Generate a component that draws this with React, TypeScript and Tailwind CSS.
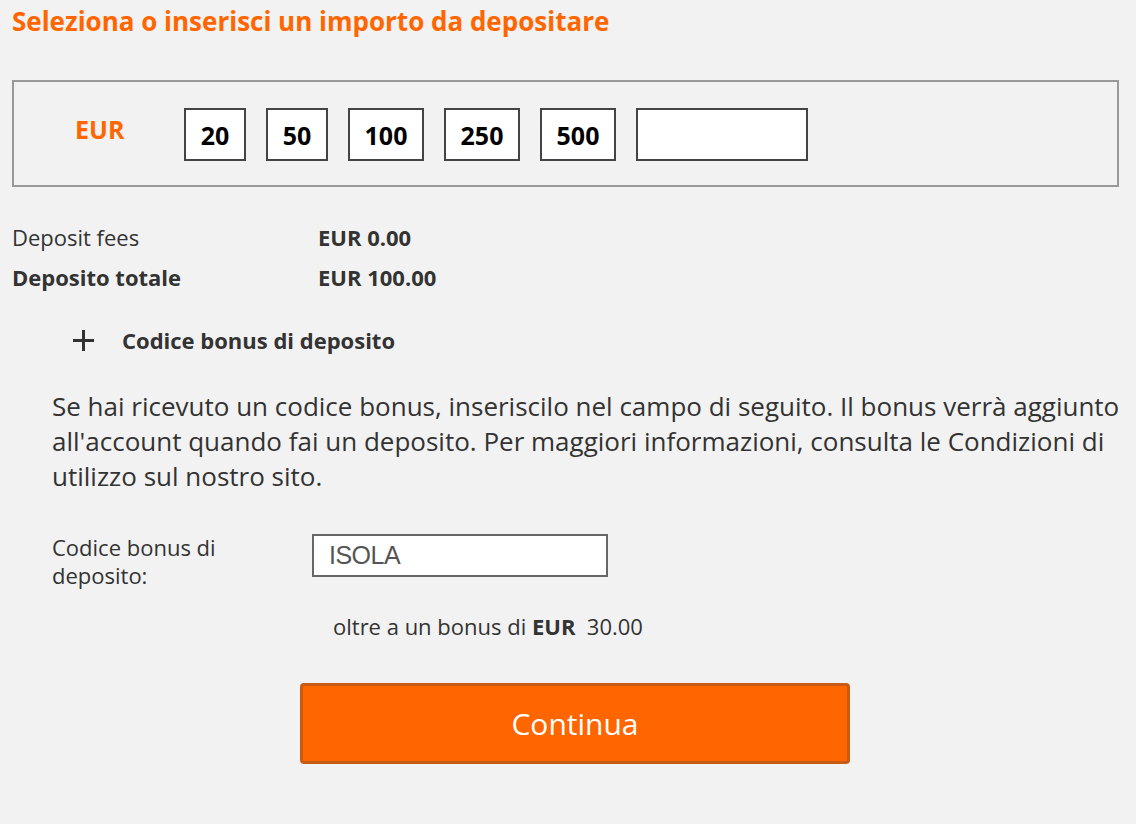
import React, { useState } from "react";

const amounts = [
  { value: "20", w: "w-[62px]" },
  { value: "50", w: "w-[62px]" },
  { value: "100", w: "w-[76px]" },
  { value: "250", w: "w-[76px]" },
  { value: "500", w: "w-[76px]" },
];

export default function App() {
  const [amount, setAmount] = useState("100");
  const [code, setCode] = useState("ISOLA");

  return (
    <div className="min-h-[824px] w-[1136px] bg-[#f2f2f2] font-['Open_Sans',sans-serif] text-[#333]">
      <h1 className="pl-[12px] pt-[5px] text-[26px] font-bold leading-[32px] text-[#ff6600]">
        Seleziona o inserisci un importo da depositare
      </h1>

      {/* amount picker */}
      <div className="ml-[12px] mt-[43px] flex h-[107px] w-[1107px] items-start border-2 border-[#999] pl-[61px] pt-[26px]">
        <div className="mt-[6px] w-[109px] text-[25px] font-bold leading-[30px] text-[#ff6600]">EUR</div>
        <div className="flex gap-[20px]">
          {amounts.map((a) => (
            <button
              key={a.value}
              onClick={() => setAmount(a.value)}
              className={`${a.w} flex h-[53px] items-center justify-center border-2 border-[#444] bg-white pt-[2px] text-[25px] font-bold text-black`}
            >
              {a.value}
            </button>
          ))}
          <input
            type="text"
            className="h-[53px] w-[172px] border-2 border-[#444] bg-white px-2 text-[22px] outline-none"
          />
        </div>
      </div>

      {/* summary */}
      <div className="mt-[37px] pl-[12px] text-[22px] leading-[26px]">
        <div className="flex">
          <span className="w-[306px]">Deposit fees</span>
          <span className="font-bold">EUR 0.00</span>
        </div>
        <div className="mt-[14px] flex font-bold">
          <span className="w-[306px]">Deposito totale</span>
          <span>EUR {Number(amount).toFixed(2)}</span>
        </div>
      </div>

      <div className="mt-[37px] flex items-center pl-[72px] text-[22px] font-bold leading-[26px]">
        <svg width="23" height="23" viewBox="0 0 23 23" className="mr-[27px]">
          <path d="M11.5 1v21M1 11.5h21" stroke="#333" strokeWidth="3" />
        </svg>
        Codice bonus di deposito
      </div>

      <p className="mt-[36px] whitespace-nowrap pl-[52px] text-[26px] leading-[35px]">
        Se hai ricevuto un codice bonus, inseriscilo nel campo di seguito. Il bonus verrà aggiunto
        <br />
        all'account quando fai un deposito. Per maggiori informazioni, consulta le Condizioni di
        <br />
        utilizzo sul nostro sito.
      </p>

      <div className="mt-[39px] flex items-start pl-[52px]">
        <label className="w-[260px] text-[22px] leading-[28px]">
          Codice bonus di
          <br />
          deposito:
        </label>
        <input
          type="text"
          value={code}
          onChange={(e) => setCode(e.target.value)}
          className="mt-[1px] h-[43px] w-[296px] border-2 border-[#666] bg-white px-[15px] font-['Liberation_Sans',sans-serif] text-[25px] tracking-[-0.5px] text-[#555] outline-none"
        />
      </div>

      <div className="mt-[24px] pl-[333px] text-[22px] leading-[26px]">
        oltre a un bonus di <b>EUR</b>&nbsp; 30.00
      </div>

      <div className="mt-[44px] pl-[300px]">
        <button className="h-[81px] w-[550px] rounded-[4px] border-[3px] border-[#c75a14] bg-[#ff6600] text-[30px] text-white">
          Continua
        </button>
      </div>
    </div>
  );
}
